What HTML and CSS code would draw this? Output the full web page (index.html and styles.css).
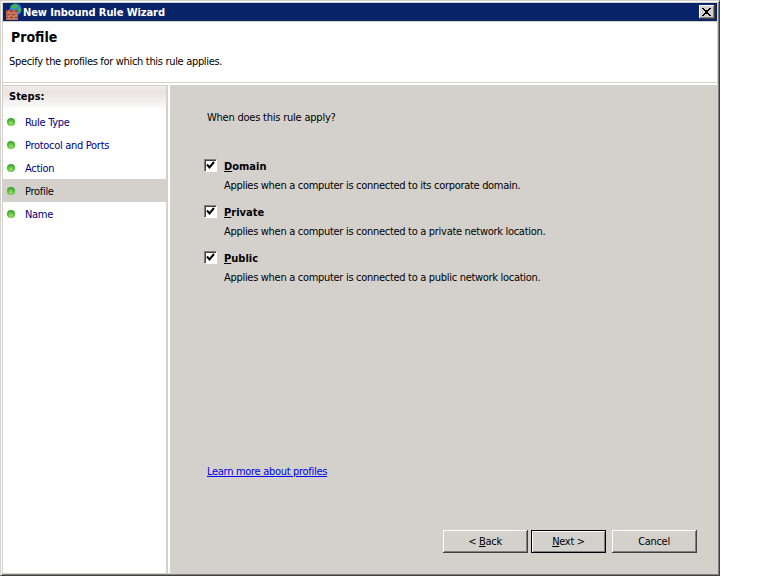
FILE: index.html
```html
<!DOCTYPE html>
<html lang="en">
<head>
<meta charset="utf-8">
<title>New Inbound Rule Wizard</title>
<link rel="stylesheet" href="styles.css">
</head>
<body>
<div class="window">
  <div class="titlebar">
    <svg class="appicon" width="17" height="17" viewBox="0 0 17 17">
      <circle cx="10.500" cy="6.500" r="6" fill="#2f86d6"/>
      <path d="M7 2.500 10 1l3 1-1 3-3 1-2-1zM13 6l2.500-1 .5 3-2 2z" fill="#47b43c"/>
      <rect x="1" y="7" width="12" height="10" fill="#a8442c"/>
      <path d="M1 10h12M1 13h12M1 16h12M4 7v3M9 7v3M6 10v3M11 10v3M4 13v3M9 13v3" stroke="#d89880" stroke-width="1" fill="none"/>
    </svg>
    <span class="title-text">New Inbound Rule Wizard</span>
    <span class="close-btn">
      <svg width="9" height="8" viewBox="0 0 9 8"><path d="M0 0h2v1h1v1h3V1h1V0h2v1H8v1H7v1H6v2h1v1h1v1h1v1H7V7H6V6H3v1H2v1H0V7h1V6h1V5h1V3H2V2H1V1H0z" fill="#000"/></svg>
    </span>
  </div>
  <div class="header">
    <h1 class="header-title">Profile</h1>
    <p class="header-sub">Specify the profiles for which this rule applies.</p>
  </div>
  <div class="body">
    <nav class="steps">
      <div class="steps-head">Steps:</div>
      <ul class="steps-list">
        <li class="step"><i class="dot"></i><span class="step-label">Rule Type</span></li>
        <li class="step"><i class="dot"></i><span class="step-label">Protocol and Ports</span></li>
        <li class="step"><i class="dot"></i><span class="step-label">Action</span></li>
        <li class="step current"><i class="dot"></i><span class="step-label">Profile</span></li>
        <li class="step"><i class="dot"></i><span class="step-label">Name</span></li>
      </ul>
    </nav>
    <main class="content">
      <p class="question">When does this rule apply?</p>
      <div class="options">
        <div class="option">
          <span class="check"><svg width="9" height="9" viewBox="0 0 9 9"><path d="M1 3.500 3.500 6.500 8 1" stroke="#000" stroke-width="2" fill="none"/></svg></span>
          <div class="option-text">
            <div class="option-name"><u>D</u>omain</div>
            <div class="option-desc">Applies when a computer is connected to its corporate domain.</div>
          </div>
        </div>
        <div class="option">
          <span class="check"><svg width="9" height="9" viewBox="0 0 9 9"><path d="M1 3.500 3.500 6.500 8 1" stroke="#000" stroke-width="2" fill="none"/></svg></span>
          <div class="option-text">
            <div class="option-name"><u>P</u>rivate</div>
            <div class="option-desc">Applies when a computer is connected to a private network location.</div>
          </div>
        </div>
        <div class="option">
          <span class="check"><svg width="9" height="9" viewBox="0 0 9 9"><path d="M1 3.500 3.500 6.500 8 1" stroke="#000" stroke-width="2" fill="none"/></svg></span>
          <div class="option-text">
            <div class="option-name"><u>P</u>ublic</div>
            <div class="option-desc">Applies when a computer is connected to a public network location.</div>
          </div>
        </div>
      </div>
      <a class="learn" href="#">Learn more about profiles</a>
      <div class="buttons">
        <button class="btn">&lt; <u>B</u>ack</button>
        <button class="btn btn-default"><u>N</u>ext &gt;</button>
        <button class="btn btn-cancel">Cancel</button>
      </div>
    </main>
  </div>
</div>
</body>
</html>
```
FILE: styles.css
```css
* { box-sizing: border-box; }
html, body { margin: 0; padding: 0; background: #fff; }
body { width: 768px; height: 576px; font-family: "DejaVu Sans Condensed", "DejaVu Sans", sans-serif; font-size: 11px; letter-spacing: -0.3px; color: #000; }

.window {
  width: 720px; height: 576px;
  display: flex; flex-direction: column;
  background: #d4d1cc;
  border-top: 1px solid #d4d1cc;
  border-left: 1px solid #d4d1cc;
  border-right: 1px solid #404040;
  border-bottom: 1px solid #404040;
  box-shadow: inset 1px 1px 0 #fff, inset -1px -1px 0 #808080;
  padding: 2px;
}

.titlebar {
  height: 18px; flex: none;
  background: #0a246a;
  display: flex; align-items: center;
  color: #fff; font-weight: bold; font-size: 11px; letter-spacing: -0.08px;
  padding: 0 2px 0 2px;
}
.appicon { flex: none; margin-top: -2px; }
.title-text { margin-left: 1px; }
.close-btn {
  margin-left: auto; width: 16px; height: 14px;
  background: #d4d1cc;
  border-right: 1px solid #404040; border-bottom: 1px solid #404040;
  box-shadow: inset 1px 1px 0 #fff, inset -1px -1px 0 #808080;
  display: flex; align-items: center; justify-content: center;
}
.close-btn svg { display: block; }

.header {
  height: 61px; flex: none;
  background: #fff; margin-top: 1px;
  border-bottom: 1px solid #d4d1cc;
}
.header-title { margin: 7px 0 0 8px; font-size: 14px; line-height: 17px; font-weight: bold; letter-spacing: 0; }
.header-sub { margin: 9px 0 0 6px; font-size: 11px; line-height: 14px; letter-spacing: -0.32px; }

.body { flex: 1; display: flex; min-height: 0; background: #fff; padding-top: 2px; }

.steps {
  width: 165px; flex: none; background: #fff;
  border-right: 2px solid #d4d1cc;
  border-top: 1px solid #d4d1cc;
}
.steps-head {
  height: 22px; padding: 0 0 0 6px;
  font-weight: bold; line-height: 21px; letter-spacing: 0;
  background: linear-gradient(#f0ebe9, #e9e4e2 30%, #fbf9f9);
}
.steps-list { list-style: none; margin: 2px 0 0; padding: 0; }
.step { height: 23px; display: flex; align-items: center; padding: 1px 0 0 4px; color: #00007f; }
.step.current { background: #d4d1cc; color: #000; }
.dot {
  width: 8px; height: 8px; border-radius: 50%; flex: none;
  background: radial-gradient(circle at 50% 70%, #98e868, #3aa52a 70%);
}
.step-label { margin-left: 10px; }

.content { flex: 1; background: #d4d1cc; margin-left: 2px; display: flex; flex-direction: column; min-width: 0; }
.question { margin: 26px 0 0 37px; line-height: 14px; letter-spacing: -0.22px; }
.options { margin: 33px 0 0 34px; display: flex; flex-direction: column; gap: 14px; }
.option { display: flex; align-items: flex-start; height: 32px; }
.check {
  width: 13px; height: 13px; flex: none; background: #fff; margin-top: 1px;
  border-top: 1px solid #808080; border-left: 1px solid #808080;
  border-right: 1px solid #fff; border-bottom: 1px solid #fff;
  box-shadow: inset 1px 1px 0 #404040;
  display: flex; align-items: center; justify-content: center;
}
.check svg { display: block; }
.option-text { margin-left: 7px; padding-top: 1px; }
.option-name { font-weight: bold; line-height: 15px; letter-spacing: 0; }
.option-desc { line-height: 14px; margin-top: 5px; }

.learn { margin: 183px 0 0 37px; color: #0000ee; line-height: 14px; align-self: flex-start; }

.buttons { margin: auto 20px 20px 0; display: flex; justify-content: flex-end; }
.btn {
  width: 85px; height: 23px; padding: 0;
  font: 11px "DejaVu Sans Condensed", "DejaVu Sans", sans-serif; letter-spacing: -0.3px; color: #000;
  background: #d4d1cc;
  border: 0;
  border-right: 1px solid #404040; border-bottom: 1px solid #404040;
  box-shadow: inset 1px 1px 0 #fff, inset -1px -1px 0 #808080;
}
.btn-default { width: 75px; margin-left: 3px; border: 1px solid #000; }
.btn-cancel { margin-left: 6px; }
```
